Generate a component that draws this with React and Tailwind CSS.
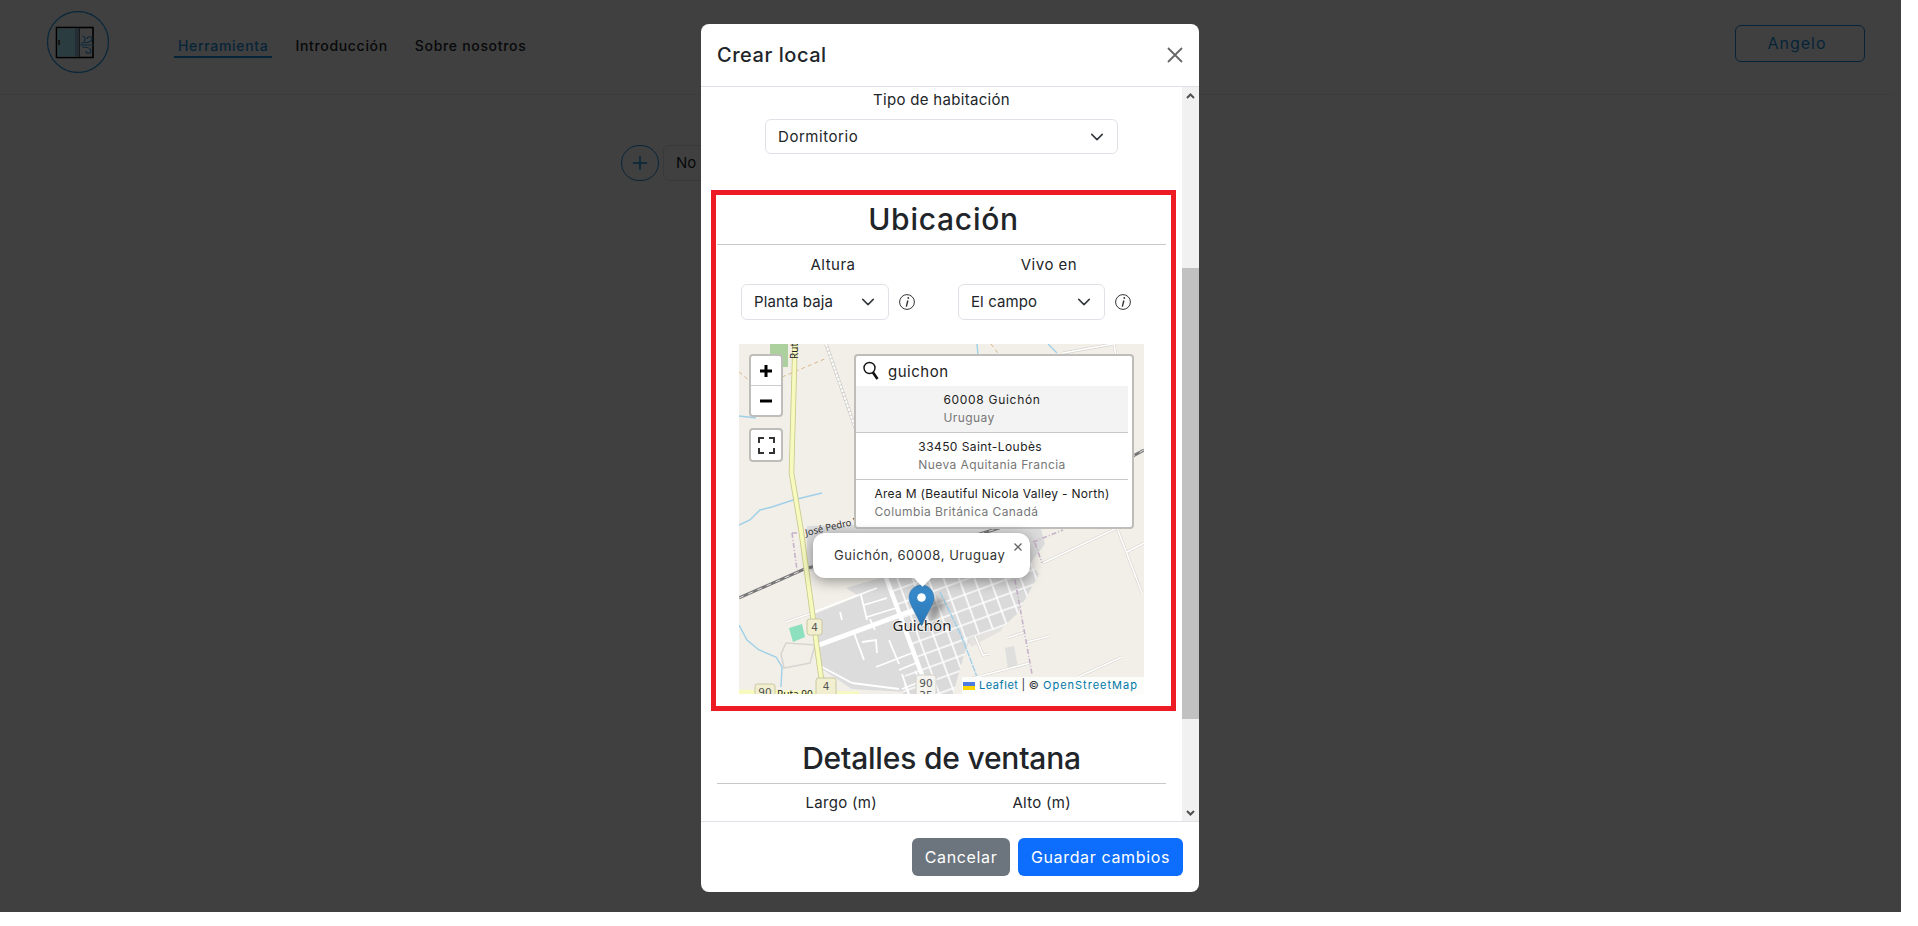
import { useId } from 'react';

function Chevron({ className = '' }) {
  return (
    <svg viewBox="0 0 16 16" className={`h-[14px] w-[14px] ${className}`} fill="none" stroke="#343a40" strokeWidth="1.800" strokeLinecap="round" strokeLinejoin="round">
      <path d="m2 5 6 6 6-6" />
    </svg>
  );
}

function InfoIcon() {
  return (
    <svg viewBox="0 0 16 16" className="w-4 h-4 shrink-0" fill="none" stroke="#333" strokeWidth="1">
      <circle cx="8" cy="8" r="7.4" />
      <path d="M8.900 6.500 7.300 12.700" strokeWidth="1.400" />
      <circle cx="9.300" cy="4" r="0.900" fill="#333" stroke="none" />
    </svg>
  );
}

function SelectBox({ value, className = '' }) {
  return (
    <div className={`flex items-center justify-between rounded-md border border-[#dee2e6] bg-white pl-3 pr-[13px] text-[15px] text-[#212529] ${className}`}>
      <span>{value}</span>
      <Chevron />
    </div>
  );
}

function Logo() {
  return (
    <svg width="62" height="62" viewBox="0 0 62 62" className="shrink-0" fill="none">
      <circle cx="31" cy="31" r="30.500" stroke="#2f9fe6" strokeWidth="1.300" />
      <rect x="9.500" y="16.500" width="36.500" height="30" fill="#fff" stroke="#000" strokeWidth="1.600" />
      <rect x="10.500" y="17.500" width="17.500" height="28" fill="#a8f0ff" />
      <rect x="28" y="17.500" width="4" height="28" fill="#8fb5c9" />
      <path d="M32.500 17v29" stroke="#222" strokeWidth="0.700" />
      <rect x="11" y="29" width="2" height="5" fill="#555" />
      <path d="M33 34h14M34 32c7 0 11-1 11-4s-5-3-5 0M35 36c6 0 9 1 9 4s-5 3-5 0M37 31c2-3 1-6-2-6" stroke="#2f9fe6" strokeWidth="1.200" />
    </svg>
  );
}

function Shield({ x, y, w, h, lines, fill = '#f1efcf', stroke = '#c9c8a0' }) {
  return (
    <g>
      <rect x={x} y={y} width={w} height={h} rx="2.500" fill={fill} stroke={stroke} strokeWidth="1" />
      {lines.map((t, i) => (
        <text key={i} x={x + w / 2} y={y + 12 + i * 12} textAnchor="middle" fontSize="10.500" fontFamily="DejaVu Sans, sans-serif" fill="#555">{t}</text>
      ))}
    </g>
  );
}

function MapDrawing() {
  const id = useId().replace(/[^a-z0-9]/gi, '');
  const white = [
    'M75 268 138 244', 'M122 251 128 276', 'M125 261 148 254', 'M128 273 157 264', 'M131 275 136 286',
    'M115 289 125 316', 'M123 298 137 296 138 309', 'M137 323 173 309', 'M160 326 177 319',
    'M150 296 160 320', 'M163 345 188 335', 'M163 330 170 350', 'M83 323 113 339', 'M113 339 160 345',
    'M101 268 103 276',
  ];
  const outside = [
    'M304 219 378 184', 'M378 184 403 249', 'M388 208 405 199', 'M268 294 286 288', 'M288 298 311 292',
    'M339 333 383 313', 'M236 292 244 311 250 310', 'M234 334 291 319', 'M47 278 76 268', 'M324 9 374 0',
    'M375 0 377 12', 'M403 110 399 105',
  ];
  return (
    <svg width="405" height="350" viewBox="0 0 405 350" className="block">
      <defs>
        <pattern id={`grid${id}`} width="14.500" height="14" patternUnits="userSpaceOnUse" patternTransform="rotate(-20 183 279)">
          <rect width="14.500" height="14" fill="#dadada" />
          <path d="M0 1H14.500M1 0V14" stroke="#fff" strokeWidth="1.600" />
        </pattern>
        <linearGradient id={`pin${id}`} x1="0" y1="0" x2="0" y2="1">
          <stop offset="0" stopColor="#3b8fd0" />
          <stop offset="1" stopColor="#2a76b6" />
        </linearGradient>
        <filter id={`blur${id}`} x="-50%" y="-50%" width="200%" height="200%">
          <feGaussianBlur stdDeviation="3" />
        </filter>
      </defs>
      <rect width="405" height="350" fill="#f2efe9" />
      <rect x="31" y="0" width="18" height="23" fill="#add19e" />

      {/* limites y arroyos */}
      <path d="M0 28 12 38M43 33 88 14M252 0 258 8 262 11M352 120 370 128" stroke="#dab88c" strokeWidth="1" strokeDasharray="4 3" fill="none" />
      <g fill="none" stroke="#9fd0e8" strokeWidth="1.400">
        <path d="M0 72 17 74" />
        <path d="M0 181 11 176 21 166 33 163 54 156 83 149" />
        <path d="M0 281 8 296 20 306 37 313 43 323 42 343" />
        <path d="M238 0 239 11M309 0 318 9" />
      </g>
      <path d="M87 0 117 86" stroke="#cfcdc8" strokeWidth="3.400" />
      <path d="M87 0 117 86" stroke="#fff" strokeWidth="2" strokeDasharray="3 1" />

      {/* zona urbana */}
      <path d="M68 182 300 178 306 200 276 239 264 283 229 300 205 350 113 345 83 325 76 270 120 252 107 244 148 232 100 232 68 226Z" fill="#dcdcdc" />
      <path d="M148 236 276 200 300 230 278 270 264 283 229 297 214 350 190 350 165 278Z" fill={`url(#grid${id})`} />
      <path d="M164 350 190 350 182 325 166 330Z" fill={`url(#grid${id})`} />
      <g stroke="#fff" strokeWidth="1.800" fill="none">
        {white.map((d) => <path key={d} d={d} />)}
      </g>
      <path d="M80 301 175 266" stroke="#fff" strokeWidth="5" />
      <path d="M145 228 190 350" stroke="#fff" strokeWidth="4.500" />
      <path d="M201 248 221 289 229 309 238 333" stroke="#9fd0e8" strokeWidth="1.400" fill="none" strokeDasharray="7 1" />
      <path d="M229 294 264 283 262 287 232 303Z" fill="#e4e3e0" />
      <path d="M266 304 275 302 279 323 269 326Z" fill="#dfdfdd" />
      <path d="M42 310 47 299 76 301 71 319 45 324Z" fill="none" stroke="#d8d6d2" strokeWidth="1.600" />

      <g stroke="#d6d3cd" strokeWidth="2.800" fill="none">
        {outside.map((d) => <path key={d} d={d} />)}
      </g>
      <g stroke="#fff" strokeWidth="1.600" fill="none">
        {outside.map((d) => <path key={d} d={d} />)}
      </g>

      <path d="M53 189 58 226M53 189 64 189M276 236 293 330M294 198 324 186M296 199 303 219" stroke="#c6b2c8" strokeWidth="1.600" strokeDasharray="5 2 1 2" fill="none" />

      {/* via del tren */}
      <path d="M0 254 68 224 241 190 260 184 405 106" stroke="#777" strokeWidth="3" fill="none" />
      <path d="M0 254 68 224 241 190 260 184 405 106" stroke="#fff" strokeWidth="0.800" strokeDasharray="5 5" fill="none" />

      {/* ruta 4 */}
      <path d="M56 0 52.500 129 62 186 72 259 82 333 92 350" stroke="#c9c98b" strokeWidth="5.500" fill="none" />
      <path d="M56 0 52.500 129 62 186 72 259 82 333 92 350" stroke="#f7fabf" strokeWidth="3.800" fill="none" />
      <path d="M0 348 120 350" stroke="#f7fabf" strokeWidth="5" />
      <text transform="translate(59 15) rotate(-90)" fontSize="10" fontFamily="Noto Sans, sans-serif" fill="#222">Ruta</text>
      <text x="38" y="354" fontSize="10" fontFamily="Noto Sans, sans-serif" fill="#222">Ruta 90</text>
      <text transform="translate(67 192) rotate(-13)" fontSize="9.500" fontFamily="Noto Sans, sans-serif" fill="#333">José Pedro Varela</text>

      <path d="M50 284 63 280 66 293 54 298Z" fill="#8ce0bd" />

      <Shield x={68} y={275} w={15} h={16} lines={['4']} />
      <Shield x={77} y={334} w={20} h={22} lines={['4', '90']} />
      <Shield x={16} y={340} w={20} h={16} lines={['90']} />
      <Shield x={177} y={331} w={20} h={26} lines={['90', '35']} fill="#f4f3ee" stroke="#d2d1cb" />

      {/* marcador */}
      <path d="M188 252 207 258 192 280Z" fill="#333" opacity="0.45" filter={`url(#blur${id})`} />
      <text x="183" y="287" textAnchor="middle" fontSize="15" fontFamily="Noto Sans, sans-serif" fill="#222" stroke="#fff" strokeOpacity="0.6" strokeWidth="2" paintOrder="stroke">Guichón</text>
      <g transform="translate(170 241)">
        <path d="M12.500 0C5.600 0 0 5.600 0 12.500 0 19 8 30 12.500 41 17 30 25 19 25 12.500 25 5.600 19.400 0 12.500 0Z" fill={`url(#pin${id})`} stroke="#2a6fa8" strokeWidth="0.500" />
        <circle cx="12.500" cy="12.500" r="4.300" fill="#fff" />
      </g>
    </svg>
  );
}

function SearchResult({ title, sub, active, titleClass }) {
  return (
    <div className={`h-[47px] pt-[5px] text-center border-b border-[#c8c8c8] last:border-b-0 ${active ? 'bg-[#f3f3f3]' : ''}`}>
      <div className="inline-block text-left">
        <div className={`text-[12px] leading-[18px] text-[#222] whitespace-nowrap ${titleClass}`}>{title}</div>
        <div className="text-[12px] leading-[18px] tracking-[0.42px] text-[#777] whitespace-nowrap">{sub}</div>
      </div>
    </div>
  );
}

function LocationMap() {
  return (
    <div className="relative ml-[23px] mt-6 h-[350px] w-[405px] overflow-hidden">
      <MapDrawing />

      <div className="absolute left-[10px] top-[10px] w-[34px] rounded-[4px] border-2 border-[#bfbdb9] bg-white">
        <div className="flex h-[30px] items-center justify-center border-b border-[#ccc]">
          <svg width="14" height="14" viewBox="0 0 14 14"><path d="M7 1v12M1 7h12" stroke="#000" strokeWidth="3" /></svg>
        </div>
        <div className="flex h-[29px] items-center justify-center">
          <svg width="14" height="14" viewBox="0 0 14 14"><path d="M1 7h12" stroke="#000" strokeWidth="3" /></svg>
        </div>
      </div>

      <div className="absolute left-[10px] top-[84px] flex h-[34px] w-[34px] items-center justify-center rounded-[4px] border-2 border-[#bfbdb9] bg-white">
        <svg width="17" height="17" viewBox="0 0 17 17" fill="none" stroke="#333" strokeWidth="2">
          <path d="M1 6V1h5M11 1h5v5M16 11v5h-5M6 16H1v-5" />
        </svg>
      </div>

      <div className="absolute left-[115px] top-[10px] w-[280px] rounded-[4px] border-2 border-[#bfbdb9] bg-white">
        <div className="flex h-[30px] items-center pl-[7px]">
          <svg width="17" height="20" viewBox="0 0 17 20" fill="none" stroke="#111" className="shrink-0">
            <circle cx="6.500" cy="7" r="5.500" strokeWidth="1.400" />
            <path d="m10 11.500 4.500 6.500" strokeWidth="2.600" />
          </svg>
          <span className="ml-[8px] pt-[2px] text-[15px] tracking-[0.5px] text-[#222]">guichon</span>
        </div>
        <div className="mr-1">
          <SearchResult active title="60008 Guichón" sub="Uruguay" titleClass="tracking-[0.7px]" />
          <SearchResult title="33450 Saint-Loubès" sub="Nueva Aquitania Francia" titleClass="tracking-[0.42px]" />
          <SearchResult title="Area M (Beautiful Nicola Valley - North)" sub="Columbia Británica Canadá" titleClass="tracking-[0.3px]" />
        </div>
      </div>

      <div className="absolute left-[74px] top-[189px] h-[45px] w-[217px] rounded-xl bg-white shadow-[0_3px_14px_rgba(0,0,0,0.4)]">
        <div className="pl-[21px] text-[13px] leading-[44px] tracking-[0.55px] text-[#333] whitespace-nowrap">Guichón, 60008, Uruguay</div>
        <svg width="10" height="10" viewBox="0 0 10 10" className="absolute right-[7px] top-[9px]" stroke="#666" strokeWidth="1.300"><path d="m1.500 1.500 7 7M8.500 1.500l-7 7" /></svg>
        <div className="absolute left-[103px] top-[38px] h-[13px] w-[13px] rotate-45 bg-white" />
      </div>

      <div className="absolute bottom-0 right-0 flex h-[17px] w-[182px] items-center bg-white/80 pl-[1px] text-[11px] tracking-[0.55px] text-[#333] whitespace-nowrap">
        <svg width="12" height="8" viewBox="0 0 12 8" className="mr-1 shrink-0">
          <rect width="12" height="4" fill="#4c7be1" />
          <rect y="4" width="12" height="4" fill="#ffd500" />
        </svg>
        <span className="text-[#0078a8]">Leaflet</span>
        <span className="mx-[3px]">|</span>
        <span>©&nbsp;</span>
        <span className="tracking-[1px] text-[#0078a8]">OpenStreetMap</span>
      </div>
    </div>
  );
}

function Modal() {
  return (
    <div className="absolute left-[701px] top-6 flex h-[868px] w-[498px] flex-col overflow-hidden rounded-lg bg-white text-[#212529]">
      <div className="flex h-[63px] shrink-0 items-center justify-between border-b border-[#dee2e6] pl-4 pr-4">
        <h5 className="text-[20px] font-medium tracking-[0.55px] text-[#212529]">Crear local</h5>
        <svg width="16" height="16" viewBox="0 0 16 16" stroke="#666" strokeWidth="1.800"><path d="m1 1 14 14M15 1 1 15" /></svg>
      </div>

      <div className="flex min-h-0 flex-1">
        <div className="min-w-0 flex-1 overflow-hidden">
          <div className="pt-px text-center text-[15px] leading-6 tracking-[0.3px]">Tipo de habitación</div>
          <SelectBox value="Dormitorio" className="mx-auto mt-[7px] h-[35px] w-[353px] pt-px tracking-[0.55px]" />

          <div className="ml-[10px] mt-9 h-[521px] w-[465px] border-[5px] border-[#ed1c24]">
            <h3 className="mt-[6px] text-center text-[30px] font-medium leading-9 tracking-[0.75px]">Ubicación</h3>
            <hr className="ml-px mt-[7px] w-[449px] border-[#c8c8c8]" />
            <div className="ml-[9px] mt-2 grid w-[432px] grid-cols-2">
              <div>
                <div className="text-center text-[15px] leading-6 tracking-[0.5px]">Altura</div>
                <div className="ml-4 mt-[7px] flex items-center gap-[10px]">
                  <SelectBox value="Planta baja" className="h-9 w-[148px] tracking-[0.1px]" />
                  <InfoIcon />
                </div>
              </div>
              <div>
                <div className="text-center text-[15px] leading-6 tracking-[0.5px]">Vivo en</div>
                <div className="ml-[17px] mt-[7px] flex items-center gap-[10px]">
                  <SelectBox value="El campo" className="h-9 w-[147px] tracking-[0.1px]" />
                  <InfoIcon />
                </div>
              </div>
            </div>
            <LocationMap />
          </div>

          <h3 className="mt-[29px] text-center text-[30px] font-medium leading-9 tracking-[-0.2px]">Detalles de ventana</h3>
          <hr className="ml-4 mt-[7px] w-[449px] border-[#c8c8c8]" />
          <div className="ml-10 mt-[7px] grid w-[401px] grid-cols-2 text-center text-[15px] leading-6 tracking-[0.3px]">
            <div>Largo (m)</div>
            <div>Alto (m)</div>
          </div>
        </div>

        <div className="flex w-[17px] shrink-0 flex-col bg-[#f1f1f1]">
          <div className="flex h-[17px] items-center justify-center">
            <svg width="9" height="6" viewBox="0 0 9 6" fill="none" stroke="#505050" strokeWidth="2"><path d="m1 5 3.500-3.500L8 5" /></svg>
          </div>
          <div className="mt-[164px] h-[451px] bg-[#c1c1c1]" />
          <div className="mt-auto flex h-[17px] items-center justify-center">
            <svg width="9" height="6" viewBox="0 0 9 6" fill="none" stroke="#505050" strokeWidth="2"><path d="m1 1 3.500 3.500L8 1" /></svg>
          </div>
        </div>
      </div>

      <div className="flex h-[71px] shrink-0 items-center justify-end gap-2 border-t border-[#dee2e6] pr-4">
        <button className="h-[38px] w-[98px] rounded-md bg-[#6c757d] text-[16px] tracking-[0.65px] text-white">Cancelar</button>
        <button className="h-[38px] w-[165px] rounded-md bg-[#0d6efd] text-[16px] tracking-[0.65px] text-white">Guardar cambios</button>
      </div>
    </div>
  );
}

export default function App() {
  return (
    <div className="relative h-[926px] w-full overflow-hidden bg-white font-['Inter',sans-serif]">
      <div className="w-[1901px]">
        <nav className="flex h-[95px] w-[1893px] items-start border-b border-[#eeeeee] text-[14px] font-medium tracking-[0.68px]">
          <div className="ml-[47px] mt-[11px]"><Logo /></div>
          <div className="ml-[65px] mt-[34px] flex gap-[19px]">
            <a className="box-border h-6 border-b-2 border-[#1a8fe0] px-1 leading-6 text-[#1a8fe0]">Herramienta</a>
            <a className="h-6 px-1 leading-6 text-[#212529]">Introducción</a>
            <a className="h-6 px-1 leading-6 text-[#212529]">Sobre nosotros</a>
          </div>
          <button className="ml-auto mr-7 mt-[25px] h-[37px] w-[130px] rounded-md border border-[#1a8fe0] pb-px pr-[6px] text-[16px] font-normal tracking-[1px] text-[#1a8fe0]">Angelo</button>
        </nav>
        <div className="ml-[621px] mt-[50px] flex items-center gap-1">
          <div className="flex h-9 w-[38px] items-center justify-center rounded-full border border-[#1a8fe0]">
            <svg width="16" height="16" viewBox="0 0 16 16" stroke="#1a8fe0" strokeWidth="1.500"><path d="M8 1v14M1 8h14" /></svg>
          </div>
          <div className="flex h-9 w-[120px] items-center rounded-md border border-[#dee2e6] pl-3 text-[15px] text-[#212529]">No</div>
        </div>
      </div>

      <div className="absolute left-0 top-0 h-[912px] w-[1901px] bg-black/75" />
      <Modal />
    </div>
  );
}
